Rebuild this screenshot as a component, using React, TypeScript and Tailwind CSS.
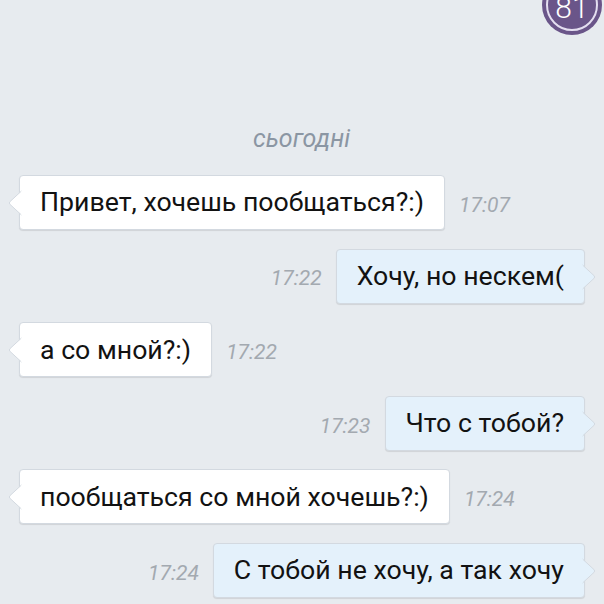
import type { ReactElement } from 'react';

type Message = {
  text: string;
  time: string;
  out: boolean;
};

const messages: Message[] = [
  { text: 'Привет, хочешь пообщаться?:)', time: '17:07', out: false },
  { text: 'Хочу, но нескем(', time: '17:22', out: true },
  { text: 'а со мной?:)', time: '17:22', out: false },
  { text: 'Что с тобой?', time: '17:23', out: true },
  { text: 'пообщаться со мной хочешь?:)', time: '17:24', out: false },
  { text: 'С тобой не хочу, а так хочу', time: '17:24', out: true },
];

function Tail({ out }: { out: boolean }): ReactElement {
  // small pointer on the side of the bubble
  return (
    <svg
      width="14"
      height="26"
      viewBox="0 0 14 26"
      className={
        out
          ? 'absolute -right-[12px] top-[14px] -scale-x-100'
          : 'absolute -left-[12px] top-[14px]'
      }
    >
      <path
        d="M13.5 1 L2 11.6 Q0.6 13 2 14.4 L13.5 25"
        fill={out ? '#e4f1fb' : '#ffffff'}
        stroke="#d3d9e0"
        strokeWidth="1"
      />
      <rect x="13" y="1.5" width="1" height="23" fill={out ? '#e4f1fb' : '#ffffff'} />
    </svg>
  );
}

function Bubble({ msg }: { msg: Message }): ReactElement {
  const time = (
    <span
      className={`italic text-[21px] text-[#a3a9b0] mt-[6px] ${msg.out ? 'mr-[14px]' : 'ml-[14px]'}`}
    >
      {msg.time}
    </span>
  );

  return (
    <div className={`flex items-center h-[55px] ${msg.out ? 'justify-end pr-[19px]' : 'pl-[19px]'}`}>
      {msg.out && time}
      <div
        className={`relative h-[55px] flex items-center px-[20px] rounded-[4px] border border-[#d3d9e0] shadow-[0_1px_1px_rgba(0,0,0,0.1)] text-[26.7px] text-[#121212] ${msg.out ? 'bg-[#e4f1fb]' : 'bg-white'}`}
      >
        {msg.text}
        <Tail out={msg.out} />
      </div>
      {!msg.out && time}
    </div>
  );
}

export default function App(): ReactElement {
  return (
    <div
      className="relative w-[604px] h-[604px] overflow-hidden bg-[#e7ebef]"
      style={{ fontFamily: 'Roboto, "Noto Sans", sans-serif' }}
    >
      {/* unread counter, cut by the top edge */}
      <div className="absolute left-[542px] -top-[25px] w-[60px] h-[60px] rounded-full bg-[#6a5589] flex items-center justify-center">
        <div className="w-[52px] h-[52px] rounded-full border-2 border-[#e4def0] flex items-center justify-center">
          <span className="text-white text-[30px] font-light leading-none mt-[6px]">81</span>
        </div>
      </div>

      <div className="flex flex-col pt-[124px]">
        <div className="text-center italic text-[25px] text-[#8b96a3] h-[30px] leading-[30px] pr-[1px]">
          сьогодні
        </div>
        <div className="flex flex-col gap-[18.6px] mt-[21px]">
          {messages.map((m, i) => (
            <Bubble key={i} msg={m} />
          ))}
        </div>
      </div>
    </div>
  );
}
